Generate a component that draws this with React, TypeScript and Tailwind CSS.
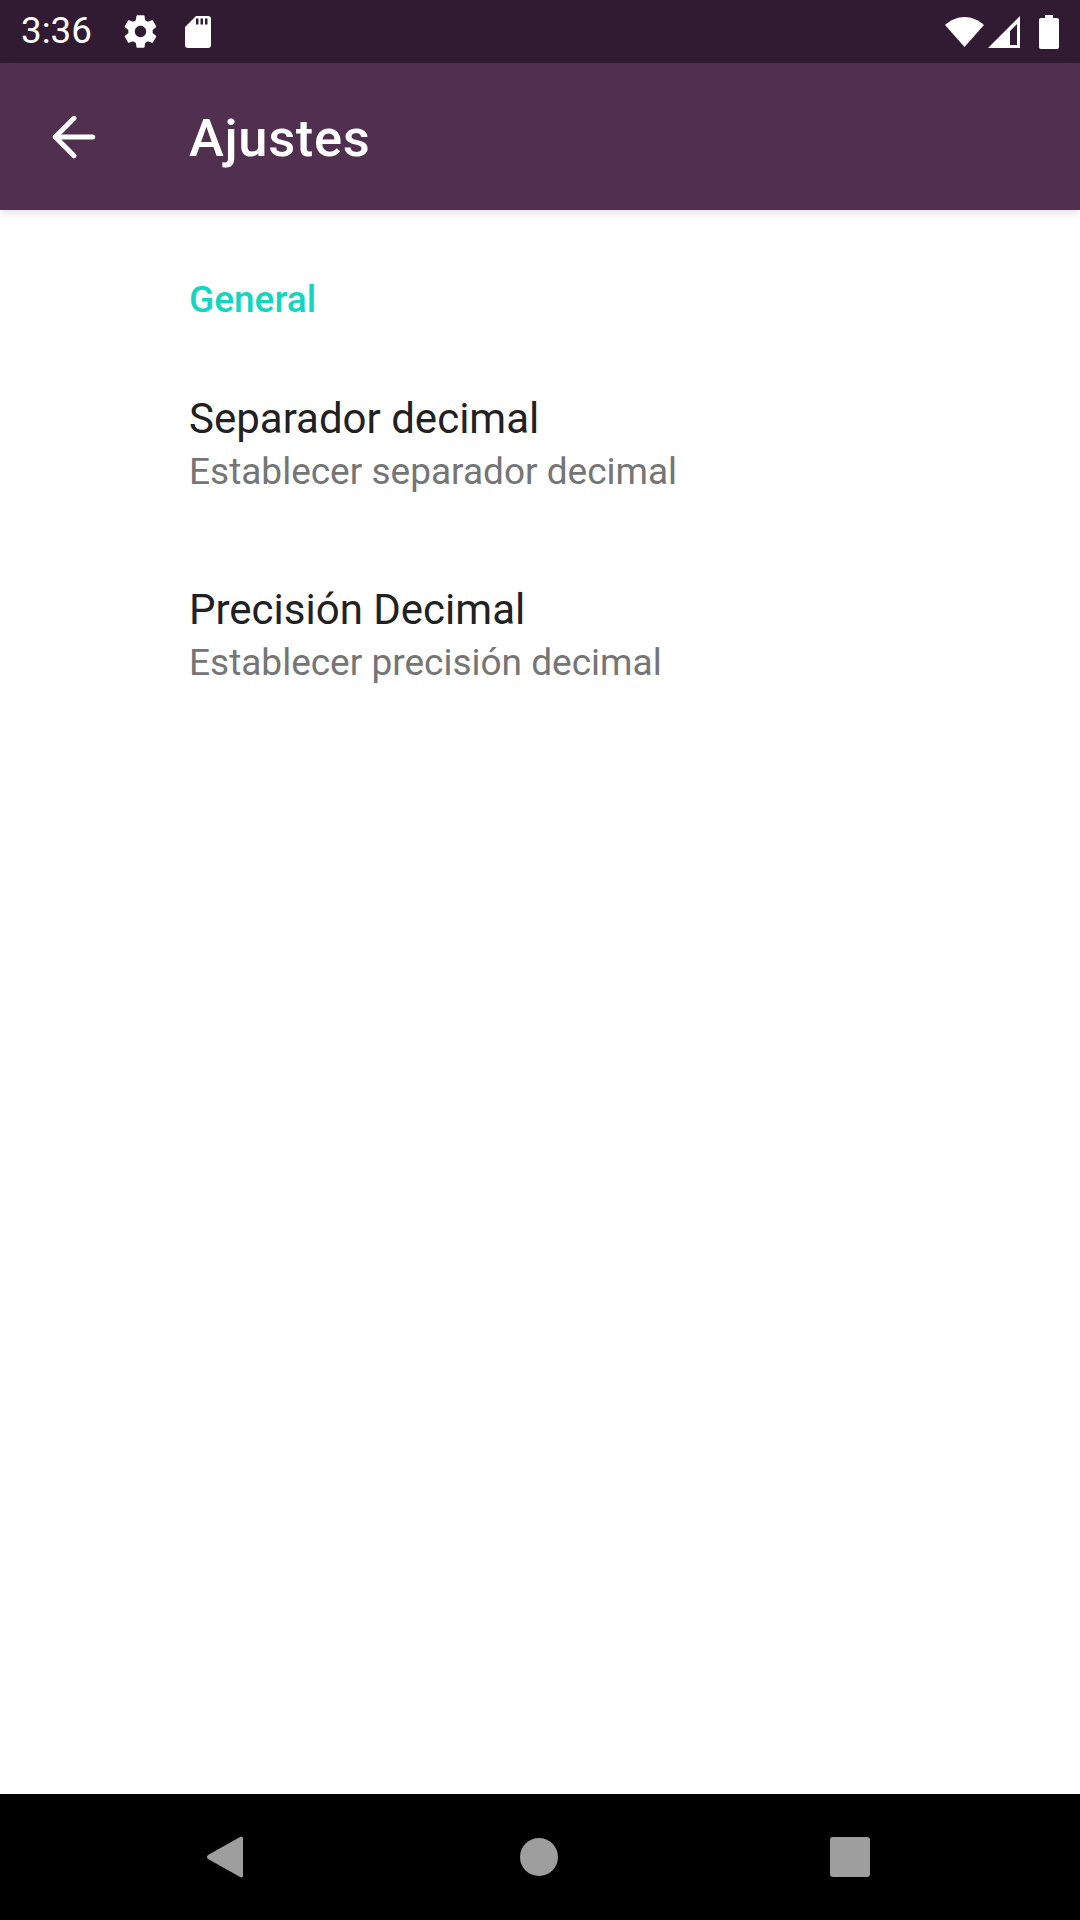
import { ArrowLeft } from "lucide-react";

const roboto = "font-['Roboto',sans-serif]";

function GearIcon() {
  return (
    <svg viewBox="0 0 24 24" className="h-[39px] w-[39px] fill-white">
      <path d="M19.43 12.98c.04-.32.07-.64.07-.98s-.03-.66-.07-.98l2.11-1.65c.19-.15.24-.42.12-.64l-2-3.46c-.12-.22-.39-.3-.61-.22l-2.49 1c-.52-.4-1.08-.73-1.69-.98l-.38-2.65C14.46 2.18 14.25 2 14 2h-4c-.25 0-.46.18-.49.42l-.38 2.65c-.61.25-1.17.59-1.69.98l-2.49-1c-.23-.09-.49 0-.61.22l-2 3.46c-.13.22-.07.49.12.64l2.11 1.65c-.04.32-.07.65-.07.98s.03.66.07.98l-2.11 1.65c-.19.15-.24.42-.12.64l2 3.46c.12.22.39.3.61.22l2.49-1c.52.4 1.08.73 1.69.98l.38 2.65c.03.24.24.42.49.42h4c.25 0 .46-.18.49-.42l.38-2.65c.61-.25 1.17-.59 1.69-.98l2.49 1c.23.09.49 0 .61-.22l2-3.46c.12-.22.07-.49-.12-.64l-2.11-1.65zM12 15.5c-1.93 0-3.5-1.57-3.5-3.5s1.57-3.5 3.5-3.500 3.500 1.570 3.500 3.500-1.570 3.500-3.500 3.500z" />
    </svg>
  );
}

function SdIcon() {
  return (
    <svg viewBox="0 0 26 32" className="h-[32px] w-[26px]">
      <path
        fill="#fff"
        fillRule="evenodd"
        d="M11 0h12a3 3 0 0 1 3 3v26a3 3 0 0 1-3 3H3a3 3 0 0 1-3-3V11zM11 2.500v6h2.500v-6zm4.500 0v6H18v-6zm4.500 0v6h2.500v-6z"
      />
    </svg>
  );
}

function WifiIcon() {
  return (
    <svg viewBox="0 0 39 30" className="h-[30px] w-[39px] fill-white">
      <path d="M19.500 30 0 8C5.500 3 12.400 0 19.500 0S33.500 3 39 8z" />
    </svg>
  );
}

function SignalIcon() {
  return (
    <svg viewBox="0 0 32 32" className="h-[32px] w-[32px]">
      <path fill="#fff" fillRule="evenodd" d="M32 0v32H0zM29 8l-7 7v14h7z" />
    </svg>
  );
}

function BatteryIcon() {
  return (
    <svg viewBox="0 0 20 34" className="h-[34px] w-[20px] fill-white">
      <path d="M6 0h8v3h4a2 2 0 0 1 2 2v27a2 2 0 0 1-2 2H2a2 2 0 0 1-2-2V5a2 2 0 0 1 2-2h4z" />
    </svg>
  );
}

function StatusBar() {
  return (
    <div className="flex h-[63px] items-center justify-between bg-[#311b33] pl-[21px] pr-[21px] text-white">
      <div className="flex items-center">
        <span className={`${roboto} w-[69px] text-[36.75px] leading-none`}>3:36</span>
        <div className="ml-[31px]">
          <GearIcon />
        </div>
        <div className="ml-[25px]">
          <SdIcon />
        </div>
      </div>
      <div className="flex items-center">
        <WifiIcon />
        <div className="ml-[4px]">
          <SignalIcon />
        </div>
        <div className="ml-[19px]">
          <BatteryIcon />
        </div>
      </div>
    </div>
  );
}

function Toolbar() {
  return (
    <div className="relative flex h-[147px] items-center bg-[#502f4f] shadow-[0_2px_8px_rgba(0,0,0,0.14)]">
      <div className="flex w-[189px] pl-[42px]">
        <ArrowLeft size={64} strokeWidth={1.9} color="#fff" />
      </div>
      <h1 className={`${roboto} pt-[3px] text-[52.5px] font-medium leading-none tracking-[0.0125em] text-white`}>
        Ajustes
      </h1>
    </div>
  );
}

function SettingRow({ title, summary }: { title: string; summary: string }) {
  return (
    <div className="h-[191px] pl-[189px] pt-[68px]">
      <div className={`${roboto} text-[42px] leading-[54px] text-[#212121]`}>{title}</div>
      <div className={`${roboto} text-[37px] leading-[52px] text-[#757575]`}>{summary}</div>
    </div>
  );
}

function NavBar() {
  return (
    <div className="flex h-[126px] items-center bg-black">
      <div className="flex w-[450px] justify-end pr-[207px]">
        <svg viewBox="0 0 36 42" className="h-[42px] w-[36px] fill-[#9e9e9e]">
          <path d="M34 0.500a2 2 0 0 1 2 1.500v38a2 2 0 0 1-2 1.500L1 23a2.500 2.500 0 0 1 0-4z" />
        </svg>
      </div>
      <div className="ml-[70px] h-[38px] w-[38px] rounded-full bg-[#9e9e9e]" />
      <div className="ml-[272px] h-[40px] w-[40px] rounded-[3px] bg-[#9e9e9e]" />
    </div>
  );
}

export default function App() {
  return (
    <div className="flex h-[1920px] w-[1080px] flex-col overflow-hidden bg-white">
      <StatusBar />
      <Toolbar />
      <main className="flex-1">
        <div className={`${roboto} pl-[189px] pt-[66px] text-[37px] font-medium leading-[48px] text-[#13d6c1]`}>
          General
        </div>
        <SettingRow title="Separador decimal" summary="Establecer separador decimal" />
        <SettingRow title="Precisión Decimal" summary="Establecer precisión decimal" />
      </main>
      <NavBar />
    </div>
  );
}
